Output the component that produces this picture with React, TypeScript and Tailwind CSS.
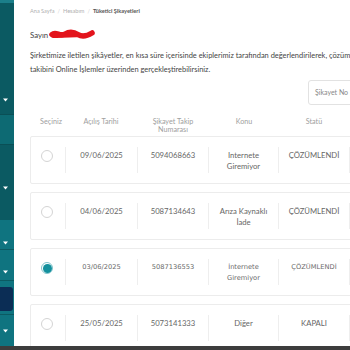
import React from "react";

interface Complaint {
  date: string;
  no: string;
  topic: string[];
  status: string;
  selected?: boolean;
  alt?: boolean;
}

const complaints: Complaint[] = [
  { date: "09/06/2025", no: "5094068663", topic: ["Internete", "Giremiyor"], status: "ÇÖZÜMLENDİ" },
  { date: "04/06/2025", no: "5087134643", topic: ["Arıza Kaynaklı", "İade"], status: "ÇÖZÜMLENDİ" },
  { date: "03/06/2025", no: "5087136553", topic: ["İnternete", "Giremiyor"], status: "ÇÖZÜMLENDİ", selected: true, alt: true },
  { date: "25/05/2025", no: "5073141333", topic: ["Diğer"], status: "KAPALI" },
];

const Caret = () => (
  <svg width="5" height="4" viewBox="0 0 5 4" className="ml-[3px]">
    <path d="M0 0.5 L5 0.5 L2.5 3.5 Z" fill="#ffffff" />
  </svg>
);

const Sidebar = () => (
  <div className="w-[14px] shrink-0 flex flex-col bg-[#0f7480]">
    <div className="h-[3px] bg-[#1b7f8a]" />
    <div className="h-[112px] bg-[#0b5a62] flex items-end pb-[12px] border-b border-[#0a4f56]">
      <Caret />
    </div>
    <div className="h-[30px] bg-[#0d6a73] border-b border-[#0a4f56]" />
    <div className="h-[75px] bg-[#0b5a62] flex items-start pt-[41px]">
      <Caret />
    </div>
    <div className="h-[30px] bg-[#0f7480] flex items-start pt-[21px] border-b border-[#0b5a62]">
      <Caret />
    </div>
    <div className="h-[31px] bg-[#0f7480] flex items-start pt-[20px] border-b border-[#0b5a62]">
      <Caret />
    </div>
    <div className="h-[33px] bg-[#0f7480] flex items-start pt-[6px]">
      <div className="w-[13px] h-[24px] bg-[#0b2d55] rounded-r-[3px]" />
    </div>
    <div className="flex-1 bg-[#0f7480] border-t border-[#0b5a62] flex items-start pt-[14px]">
      <Caret />
    </div>
  </div>
);

// redacted name
const Scribble = () => (
  <svg width="46" height="11" viewBox="0 0 46 11" className="ml-[1px]">
    <path
      d="M3 5.5 C7 2, 11 8, 16 5 S25 3, 29 5.5 S38 7, 43 4"
      stroke="#e3141c"
      strokeWidth="5.5"
      strokeLinecap="round"
      fill="none"
    />
    <path d="M4 7.5 C12 7, 22 7.5, 40 6" stroke="#e3141c" strokeWidth="3" strokeLinecap="round" fill="none" />
  </svg>
);

const Radio = ({ on }: { on?: boolean }) =>
  on ? (
    <div className="w-[12px] h-[12px] rounded-full border border-[#7fc3cb] bg-white flex items-center justify-center">
      <div className="w-[9px] h-[9px] rounded-full bg-[#13909d]" />
    </div>
  ) : (
    <div className="w-[12px] h-[12px] rounded-full border border-[#d4d4d4] bg-white" />
  );

const Row = ({ c }: { c: Complaint }) => {
  const font = c.alt
    ? "font-['DejaVu_Sans',sans-serif] text-[6.7px] text-[#6a6a6a]"
    : "font-['Lato',sans-serif] text-[7.7px] text-[#666]";
  return (
    <div className={`flex h-[48px] border border-[#ececec] rounded-[2px] bg-white ${font}`}>
      <div className="w-[34px] shrink-0 flex items-start justify-center pt-[13px] pr-[2px]">
        <Radio on={c.selected} />
      </div>
      <div className="w-[72px] shrink-0 my-[10px] border-l border-[#eeeeee] pt-[3px] text-center leading-[11px]">
        {c.date}
      </div>
      <div className="w-[71px] shrink-0 my-[10px] border-l border-[#eeeeee] pt-[3px] text-center leading-[11px]">
        {c.no}
      </div>
      <div className="w-[70px] shrink-0 my-[10px] border-l border-[#eeeeee] pt-[3px] text-center leading-[11px]">
        {c.topic.map((t) => (
          <div key={t}>{t}</div>
        ))}
      </div>
      <div className="w-[72px] shrink-0 my-[10px] border-l border-r border-[#eeeeee] pt-[3px] text-center leading-[11px]">
        {c.status}
      </div>
      <div className="flex-1" />
    </div>
  );
};

const App = () => {
  return (
    <div className="w-[350px] h-[350px] overflow-hidden flex flex-col bg-white font-['Lato',sans-serif]">
      <div className="flex flex-1 min-h-0">
        <Sidebar />
        <div className="flex-1 overflow-hidden pl-[16px]">
          <div className="w-[430px]">
            <div className="pt-[7px] flex items-center gap-[3px] text-[5.6px] leading-[7px] text-[#b0b0b0]">
              <span>Ana Sayfa</span>
              <span className="text-[#d0d0d0]">/</span>
              <span>Hesabım</span>
              <span className="text-[#d0d0d0]">/</span>
              <span className="text-[#555] font-bold">Tüketici Şikayetleri</span>
            </div>

            <div className="mt-[15px] flex items-center text-[7.8px] leading-[10px] text-[#444]">
              <span>Sayın</span>
              <Scribble />
            </div>

            <div className="mt-[9px] text-[7.45px] leading-[14px] text-[#444] whitespace-nowrap">
              <div>
                Şirketimize iletilen şikâyetler, en kısa süre içerisinde ekiplerimiz tarafından değerlendirilerek, çözümlenir.
              </div>
              <div>takibini Online İşlemler üzerinden gerçekleştirebilirsiniz.</div>
            </div>

            <div className="mt-[3px] flex">
              <div className="ml-[278px] w-[90px] h-[25px] border border-[#e2e2e2] rounded-[3px] flex items-center pl-[6px] text-[7px] text-[#888]">
                Şikayet No
              </div>
            </div>

            <div className="mt-[10px] flex h-[21px] text-[7.2px] leading-[8px] text-[#a0a0a0]">
              <div className="w-[42px] text-center pt-[3px]">Seçiniz</div>
              <div className="w-[58px] text-center pt-[3px]">Açılış Tarihi</div>
              <div className="w-[86px] text-center pt-[3px]">
                Şikayet Takip
                <br />
                Numarası
              </div>
              <div className="w-[56px] text-center pt-[3px]">Konu</div>
              <div className="w-[84px] text-center pt-[3px]">Statü</div>
            </div>

            <div className="flex flex-col gap-[8px]">
              {complaints.map((c) => (
                <Row key={c.no} c={c} />
              ))}
            </div>
          </div>
        </div>
      </div>
      <div className="h-[4px] shrink-0 bg-[#3d3d3d]" />
    </div>
  );
};

export default App;
